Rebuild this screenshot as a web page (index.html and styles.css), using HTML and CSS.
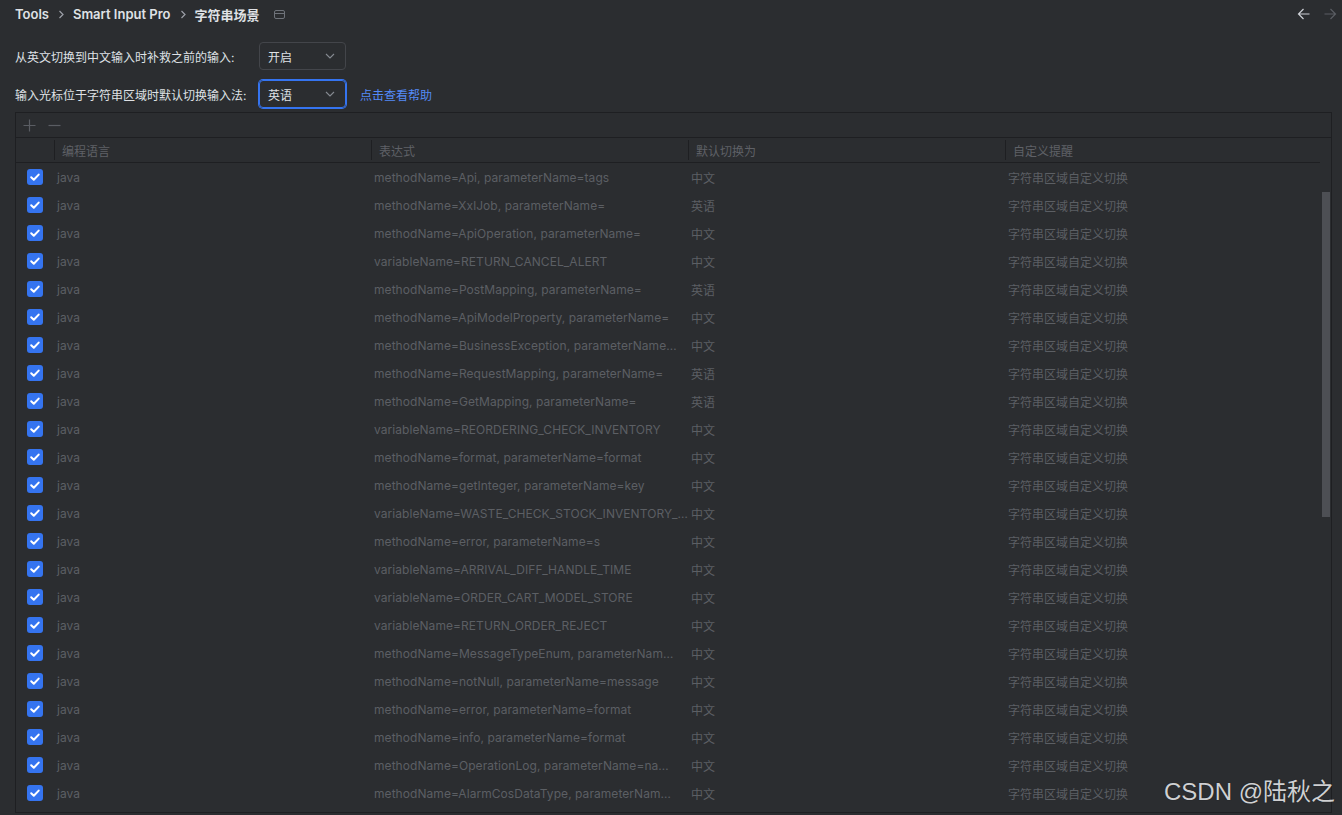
FILE: index.html
```html
<!DOCTYPE html>
<html>
<head>
    <title>字符串场景</title>
    <link rel="stylesheet" href="styles.css">
</head>
<body>

<div class="settings-page">
    <!-- Breadcrumbs -->
    <div class="crumbs">
        <span class="crumb">Tools</span>
        <svg class="crumb-sep" width="6" height="9" viewBox="0 0 6 9"><path d="M1.5 1l3.5 3.5L1.5 8" fill="none" stroke="#9da0a8" stroke-width="1.2"/></svg>
        <span class="crumb">Smart Input Pro</span>
        <svg class="crumb-sep" width="6" height="9" viewBox="0 0 6 9"><path d="M1.5 1l3.5 3.5L1.5 8" fill="none" stroke="#9da0a8" stroke-width="1.2"/></svg>
        <span class="crumb">字符串场景</span>
        <svg class="crumb-icon" width="11" height="9" viewBox="0 0 11 9"><rect x="0.5" y="0.5" width="10" height="8" rx="1.5" fill="none" stroke="#6f737a"/><path d="M0.5 3.5h10" stroke="#6f737a"/></svg>
        <div class="nav-arrows">
            <svg width="13" height="12" viewBox="0 0 13 12"><path d="M1.5 6h11M6.5 1L1.5 6l5 5" fill="none" stroke="#ced0d6" stroke-width="1.2"/></svg>
            <svg width="13" height="12" viewBox="0 0 13 12"><path d="M0.5 6h11M6.5 1l5 5-5 5" fill="none" stroke="#5a5d63" stroke-width="1.2"/></svg>
        </div>
    </div>

    <!-- Options -->
    <div class="form-grid">
        <label class="form-label">从英文切换到中文输入时补救之前的输入:</label>
        <div class="combo">
            <span>开启</span>
            <svg width="10" height="6" viewBox="0 0 10 6"><path d="M1 1l4 4 4-4" fill="none" stroke="#868a91" stroke-width="1.1"/></svg>
        </div>
        <span></span>

        <label class="form-label">输入光标位于字符串区域时默认切换输入法:</label>
        <div class="combo combo-focus">
            <span>英语</span>
            <svg width="10" height="6" viewBox="0 0 10 6"><path d="M1 1l4 4 4-4" fill="none" stroke="#868a91" stroke-width="1.1"/></svg>
        </div>
        <a class="help-link" href="#">点击查看帮助</a>
    </div>

    <!-- Table -->
    <div class="table-box">
        <div class="table-toolbar">
            <svg width="13" height="13" viewBox="0 0 13 13"><path d="M6.5 0.5v12M0.5 6.5h12" stroke="#5a5d63" stroke-width="1.2"/></svg>
            <svg width="13" height="13" viewBox="0 0 13 13"><path d="M0.5 6.5h12" stroke="#5a5d63" stroke-width="1.2"/></svg>
        </div>
        <div class="table-body">
            <div class="table-main">
                <div class="table-head">
                    <div></div>
                    <div class="th">编程语言</div>
                    <div class="th">表达式</div>
                    <div class="th">默认切换为</div>
                    <div class="th">自定义提醒</div>
                </div>
                <div id="rows"></div>
            </div>
            <div class="scroll-track">
                <div class="scroll-thumb"></div>
            </div>
        </div>
    </div>

    <div class="watermark">CSDN @陆秋之</div>
</div>

<script>
    var rows = [
        ["methodName=Api, parameterName=tags", "中文"],
        ["methodName=XxlJob, parameterName=", "英语"],
        ["methodName=ApiOperation, parameterName=", "中文"],
        ["variableName=RETURN_CANCEL_ALERT", "中文"],
        ["methodName=PostMapping, parameterName=", "英语"],
        ["methodName=ApiModelProperty, parameterName=", "中文"],
        ["methodName=BusinessException, parameterName…", "中文"],
        ["methodName=RequestMapping, parameterName=", "英语"],
        ["methodName=GetMapping, parameterName=", "英语"],
        ["variableName=REORDERING_CHECK_INVENTORY", "中文"],
        ["methodName=format, parameterName=format", "中文"],
        ["methodName=getInteger, parameterName=key", "中文"],
        ["variableName=WASTE_CHECK_STOCK_INVENTORY_…", "中文"],
        ["methodName=error, parameterName=s", "中文"],
        ["variableName=ARRIVAL_DIFF_HANDLE_TIME", "中文"],
        ["variableName=ORDER_CART_MODEL_STORE", "中文"],
        ["variableName=RETURN_ORDER_REJECT", "中文"],
        ["methodName=MessageTypeEnum, parameterNam…", "中文"],
        ["methodName=notNull, parameterName=message", "中文"],
        ["methodName=error, parameterName=format", "中文"],
        ["methodName=info, parameterName=format", "中文"],
        ["methodName=OperationLog, parameterName=na…", "中文"],
        ["methodName=AlarmCosDataType, parameterNam…", "中文"]
    ];

    var check = '<span class="check"><svg width="16" height="16" viewBox="0 0 16 16">' +
        '<path d="M4.2 8.2l2.6 2.6 4.9-5.2" fill="none" stroke="#fff" stroke-width="2" stroke-linecap="round" stroke-linejoin="round"/></svg></span>';

    var html = "";
    rows.forEach(function (r) {
        html += '<div class="tr">' +
            '<div class="td-check">' + check + '</div>' +
            '<div class="td td-latin">java</div>' +
            '<div class="td td-latin">' + r[0] + '</div>' +
            '<div class="td">' + r[1] + '</div>' +
            '<div class="td">字符串区域自定义切换</div>' +
            '</div>';
    });
    document.getElementById("rows").innerHTML = html;
</script>

</body>
</html>
```
FILE: styles.css
```css
html, body {
    margin: 0;
    height: 815px;
    overflow: hidden;
    background: #2b2d30;
}

body {
    font-family: Inter, "Noto Sans CJK SC", sans-serif;
    font-size: 12px;
    color: #dfe1e5;
}

.settings-page {
    padding: 0 10px 0 15px;
}

/* Breadcrumbs */
.crumbs {
    height: 28px;
    display: flex;
    align-items: center;
}

.crumb {
    font-weight: 600;
    font-size: 13px;
    color: #dfe1e5;
}

.crumb-sep {
    margin: 0 9px;
}

.crumb-icon {
    margin-left: 14px;
}

.nav-arrows {
    margin-left: auto;
    display: flex;
    gap: 14px;
    margin-right: -5px;
}

/* Options */
.form-grid {
    display: grid;
    grid-template-columns: 230px 87px auto;
    grid-auto-rows: 28px;
    row-gap: 10px;
    column-gap: 14px;
    align-items: center;
    padding-top: 14px;
}

.form-label {
    color: #dfe1e5;
    white-space: nowrap;
}

.combo {
    height: 28px;
    box-sizing: border-box;
    border: 1px solid #43454a;
    border-radius: 4px;
    display: flex;
    align-items: center;
    justify-content: space-between;
    padding: 0 10px 0 8px;
    color: #dfe1e5;
}

.combo-focus {
    border-color: #3574f0;
    box-shadow: 0 0 0 1px #3574f0;
}

.help-link {
    color: #548af7;
    text-decoration: none;
}

/* Table */
.table-box {
    margin-top: 4px;
    height: 701px;
    box-sizing: border-box;
    border: 1px solid #1e1f22;
    display: flex;
    flex-direction: column;
}

.table-toolbar {
    height: 24px;
    flex: none;
    border-bottom: 1px solid #1e1f22;
    display: flex;
    align-items: center;
    gap: 12px;
    padding-left: 7px;
}

.table-body {
    flex: 1;
    display: flex;
    overflow: hidden;
}

.table-main {
    flex: 1;
    overflow: hidden;
}

.table-head,
.tr {
    display: grid;
    grid-template-columns: 38px 317px 317px 317px 1fr;
}

.table-head {
    height: 24px;
    border-bottom: 1px solid #1e1f22;
    color: #5f6167;
}

.th {
    margin: 2px 0;
    border-left: 1px solid #1e1f22;
    padding-left: 7px;
    display: flex;
    align-items: center;
}

.tr {
    height: 28px;
    align-items: center;
    color: #5c5f64;
}

.td {
    padding-left: 3px;
    white-space: nowrap;
    overflow: hidden;
}

.td-latin {
    letter-spacing: 0.06px;
}

.td-check {
    padding-left: 11px;
    display: flex;
}

.check {
    width: 16px;
    height: 16px;
    border-radius: 3px;
    background: #3574f0;
    display: block;
}

.check svg {
    display: block;
}

.scroll-track {
    width: 11px;
    flex: none;
    padding-top: 54px;
}

.scroll-thumb {
    width: 8px;
    margin-left: 2px;
    height: 325px;
    background: #4d4f54;
}

.watermark {
    position: absolute;
    right: 7px;
    bottom: 8px;
    font-family: "Liberation Sans", "Noto Sans CJK SC", sans-serif;
    font-size: 24px;
    color: #cfd0d2;
    text-shadow: 0 0 1px rgba(0, 0, 0, 0.6);
}
```
